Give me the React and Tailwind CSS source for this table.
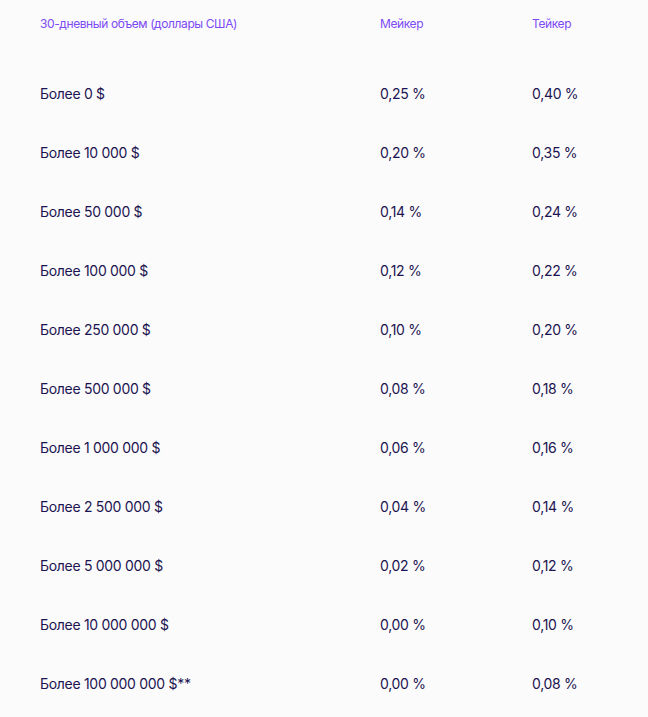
import React from 'react';

const tiers = [
    ['Более 0 $', '0,25 %', '0,40 %'],
    ['Более 10 000 $', '0,20 %', '0,35 %'],
    ['Более 50 000 $', '0,14 %', '0,24 %'],
    ['Более 100 000 $', '0,12 %', '0,22 %'],
    ['Более 250 000 $', '0,10 %', '0,20 %'],
    ['Более 500 000 $', '0,08 %', '0,18 %'],
    ['Более 1 000 000 $', '0,06 %', '0,16 %'],
    ['Более 2 500 000 $', '0,04 %', '0,14 %'],
    ['Более 5 000 000 $', '0,02 %', '0,12 %'],
    ['Более 10 000 000 $', '0,00 %', '0,10 %'],
    ['Более 100 000 000 $**', '0,00 %', '0,08 %'],
];

const App = () => {
    return (
        <div className="min-h-[717px] bg-[#fbfbfc] pl-10 font-['Inter',sans-serif]">
            <div className="grid h-[64px] grid-cols-[340px_152px_1fr] pt-4 text-[12px] leading-4 tracking-[-0.4px] text-[#7d4af5]">
                <div>30-дневный объем (доллары США)</div>
                <div>Мейкер</div>
                <div>Тейкер</div>
            </div>
            {tiers.map(([volume, maker, taker]) => (
                <div key={volume} className="grid h-[59px] grid-cols-[340px_152px_1fr] items-center text-[14px] tracking-[-0.3px] text-[#1b1450]">
                    <div>{volume}</div>
                    <div>{maker}</div>
                    <div>{taker}</div>
                </div>
            ))}
        </div>
    );
};

export default App;
